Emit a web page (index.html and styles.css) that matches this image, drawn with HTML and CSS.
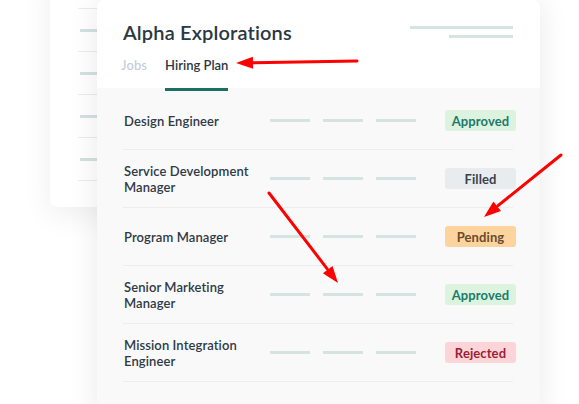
FILE: index.html
```html
<!DOCTYPE html>
<html>
<head>
<meta charset="utf-8">
<link rel="stylesheet" href="styles.css">
</head>
<body>
<div class="stage">
  <div class="back-card">
    <div class="back-row"><span class="back-dash"></span></div>
    <div class="back-row"><span class="back-dash"></span></div>
    <div class="back-row"><span class="back-dash"></span></div>
    <div class="back-row"><span class="back-dash"></span></div>
    <div class="back-row"><span class="back-dash"></span></div>
  </div>
  <div class="main-card">
    <div class="header">
      <div class="header-top">
        <h1 class="title">Alpha Explorations</h1>
        <div class="header-lines">
          <span class="hline hline-long"></span>
          <span class="hline hline-short"></span>
        </div>
      </div>
      <div class="tabs">
        <span class="tab">Jobs</span>
        <span class="tab tab-active">Hiring Plan</span>
      </div>
    </div>
    <div class="body">
      <div class="row">
        <div class="name">Design Engineer</div>
        <div class="dashes"><span class="dash"></span><span class="dash"></span><span class="dash"></span></div>
        <span class="pill pill-approved">Approved</span>
      </div>
      <div class="row">
        <div class="name">Service Development Manager</div>
        <div class="dashes"><span class="dash"></span><span class="dash"></span><span class="dash"></span></div>
        <span class="pill pill-filled">Filled</span>
      </div>
      <div class="row">
        <div class="name">Program Manager</div>
        <div class="dashes"><span class="dash"></span><span class="dash"></span><span class="dash"></span></div>
        <span class="pill pill-pending">Pending</span>
      </div>
      <div class="row">
        <div class="name">Senior Marketing Manager</div>
        <div class="dashes"><span class="dash"></span><span class="dash"></span><span class="dash"></span></div>
        <span class="pill pill-approved">Approved</span>
      </div>
      <div class="row">
        <div class="name">Mission Integration Engineer</div>
        <div class="dashes"><span class="dash"></span><span class="dash"></span><span class="dash"></span></div>
        <span class="pill pill-rejected">Rejected</span>
      </div>
    </div>
  </div>
  <svg class="arrows" width="579" height="404" viewBox="0 0 579 404">
    <g stroke="#ff0000" stroke-width="3" stroke-linecap="round" fill="none">
      <line x1="357" y1="61" x2="252" y2="62.7"/>
      <line x1="561" y1="155" x2="498" y2="205.7"/>
      <line x1="269" y1="193" x2="327.2" y2="268.8"/>
    </g>
    <g fill="#ff0000">
      <polygon points="236,63 253.1,68.7 252.9,56.7"/>
      <polygon points="484,217 501,211 493.4,201.6"/>
      <polygon points="338,283 322.9,273.2 332.5,265.9"/>
    </g>
  </svg>
</div>
</body>
</html>
```
FILE: styles.css
```css
* { box-sizing: border-box; }
html, body {
  margin: 0;
  padding: 0;
  background: #ffffff;
  width: 579px;
  height: 404px;
  overflow: hidden;
  font-family: "Lato", "Liberation Sans", sans-serif;
}
.stage {
  position: relative;
  width: 579px;
  height: 404px;
  display: grid;
  grid-template-columns: 579px;
  grid-template-rows: 404px;
  overflow: hidden;
}
.back-card {
  grid-area: 1 / 1;
  align-self: start;
  margin-left: 50px;
  margin-top: -34px;
  width: 220px;
  height: 241px;
  background: #ffffff;
  border-radius: 8px;
  box-shadow: 0 8px 30px rgba(0, 0, 0, 0.07);
  padding-left: 28px;
}
.back-row {
  height: 43px;
  border-bottom: 1px solid #e9ecee;
  display: flex;
  align-items: center;
  padding-left: 2px;
}
.back-dash {
  width: 60px;
  height: 3px;
  background: #d3e1df;
}
.main-card {
  grid-area: 1 / 1;
  align-self: start;
  margin-left: 97px;
  margin-top: 0;
  width: 443px;
  height: 420px;
  background: #f9f9f9;
  border-radius: 7px 7px 0 0;
  box-shadow: 0 0 30px rgba(0, 0, 0, 0.09);
  position: relative;
  z-index: 1;
}
.header {
  height: 88px;
  background: #ffffff;
  border-radius: 7px 7px 0 0;
  padding: 0 27px 0 26px;
  display: flex;
  flex-direction: column;
}
.header-top {
  display: flex;
  justify-content: space-between;
  align-items: flex-start;
  padding-top: 19px;
}
.title {
  margin: 0;
  font-size: 20px;
  line-height: 26px;
  font-weight: 600;
  color: #2b3742;
  letter-spacing: 0.15px;
}
.header-lines {
  display: flex;
  flex-direction: column;
  align-items: flex-end;
  gap: 6px;
  padding-top: 7px;
}
.hline {
  height: 3px;
  background: #d5e3e1;
}
.hline-long { width: 103px; }
.hline-short { width: 64px; }
.tabs {
  margin-top: auto;
  margin-bottom: -3px;
  display: flex;
  gap: 18px;
  margin-left: -2px;
  position: relative;
  z-index: 2;
}
.tab {
  font-size: 13px;
  font-weight: 500;
  color: #c3ccd9;
  padding-bottom: 15px;
  line-height: 16px;
  letter-spacing: 0.1px;
  border-bottom: 3px solid transparent;
}
.tab-active {
  font-weight: 600;
  letter-spacing: 0;
  color: #2b3742;
  border-bottom-color: #1b6f63;
}
.body {
  padding: 4px 24px 0 26px;
}
.row {
  height: 58px;
  border-bottom: 1px solid #ebeeee;
  display: flex;
  align-items: center;
  margin-right: 3px;
}
.name {
  width: 147px;
  flex: 0 0 147px;
  padding-left: 1px;
  padding-right: 10px;
  font-size: 13px;
  line-height: 16px;
  font-weight: 600;
  letter-spacing: 0.1px;
  color: #2e3a45;
}
.dashes {
  display: flex;
  gap: 13px;
}
.dash {
  width: 40px;
  height: 3px;
  background: #d5e3e1;
}
.pill {
  margin-left: auto;
  margin-right: -3px;
  width: 71px;
  height: 21px;
  border-radius: 3px;
  display: flex;
  align-items: center;
  justify-content: center;
  font-size: 13px;
  font-weight: 700;
  letter-spacing: 0.1px;
}
.pill-approved { background: #dcf3df; color: #1d7a68; }
.pill-filled { background: #e8ecef; color: #38424b; }
.pill-pending { background: #fdd49d; color: #6b4a2c; }
.pill-rejected { background: #fdd4d8; color: #9b1e36; }
.arrows {
  position: absolute;
  left: 0;
  top: 0;
  z-index: 5;
  pointer-events: none;
}
```
